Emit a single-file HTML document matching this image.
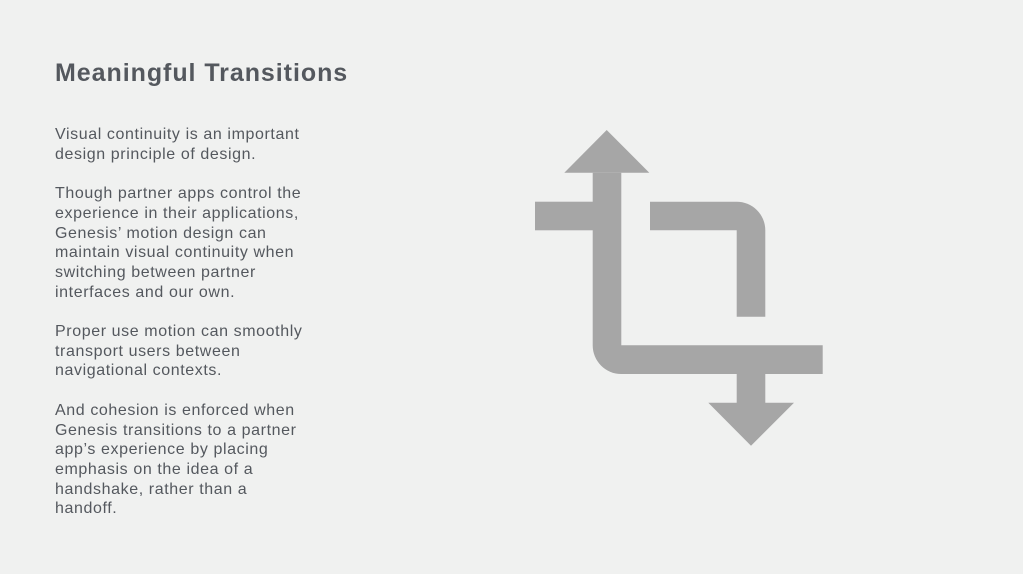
<!DOCTYPE html>
<html><head><meta charset="utf-8"><style>
html,body{margin:0;padding:0;}
body{width:1023px;height:574px;background:#f0f1f0;position:relative;overflow:hidden;font-family:"Liberation Sans",sans-serif;color:#54585e;}
h1{position:absolute;left:55px;top:58px;margin:0;font-size:25px;font-weight:bold;line-height:30px;white-space:nowrap;letter-spacing:0.95px;}
.t{position:absolute;left:55px;top:125px;font-size:16px;line-height:19.7px;white-space:nowrap;letter-spacing:0.6px;}
.t p{margin:0 0 19.7px 0;}
svg{position:absolute;left:0;top:0;}
</style></head><body>
<h1>Meaningful Transitions</h1>
<div class="t">
<p>Visual continuity is an important<br>design principle of design.</p>
<p>Though partner apps control the<br>experience in their applications,<br>Genesis’ motion design can<br>maintain visual continuity when<br>switching between partner<br>interfaces and our own.</p>
<p>Proper use motion can smoothly<br>transport users between<br>navigational contexts.</p>
<p>And cohesion is enforced when<br>Genesis transitions to a partner<br>app’s experience by placing<br>emphasis on the idea of a<br>handshake, rather than a<br>handoff.</p>
</div>
<svg width="1023" height="574" viewBox="0 0 1023 574">
<g fill="#a6a6a6">
<polygon points="606.7,130 649.3,172.7 564.3,172.7"/>
<path d="M592.7 172.7H621.3V345.3H822.7V374H621.3A28.6 28.6 0 0 1 592.7 345.3Z"/>
<rect x="535" y="201.7" width="58" height="28.6"/>
<path d="M650 201.7H736.7A28.6 28.6 0 0 1 765.3 230.3V316.7H736.7V230.3H650Z"/>
<rect x="736.7" y="373" width="28.6" height="30"/>
<polygon points="708.3,402.7 794,402.7 751,445.7"/>
</g>
</svg>
</body></html>
